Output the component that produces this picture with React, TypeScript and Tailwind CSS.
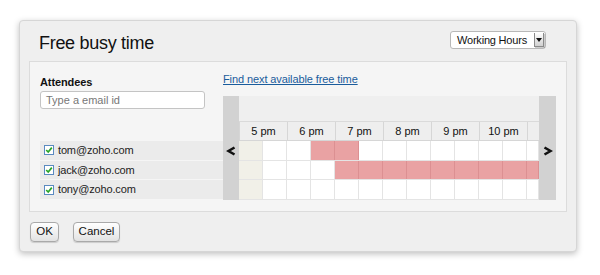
import React from "react";

const hours = ["5 pm", "6 pm", "7 pm", "8 pm", "9 pm", "10 pm"];
const busy: boolean[][] = [
  [false, false, false, true, true, false, false, false, false, false, false, false, false],
  [false, false, false, false, true, true, true, true, true, true, true, true, true],
  [false, false, false, false, false, false, false, false, false, false, false, false, false],
];
const people = ["tom@zoho.com", "jack@zoho.com", "tony@zoho.com"];

function Check() {
  return (
    <svg width="10" height="10" viewBox="0 0 10 10" className="shrink-0">
      <rect x="0.5" y="0.5" width="9" height="9" fill="#fff" stroke="#5a8ac0" />
      <path d="M2.2 5 L4.2 7 L7.8 2.6" fill="none" stroke="#2aa52a" strokeWidth="1.7" />
    </svg>
  );
}

export default function App() {
  return (
    <div className="w-[600px] h-[275px] bg-white relative overflow-hidden" style={{ fontFamily: '"Liberation Sans", Arial, sans-serif' }}>
      <div className="absolute left-[19px] top-[20px] w-[558px] h-[232px] bg-[#efefef] rounded-[4px] border border-[#d6d6d6] shadow-[0_2px_6px_rgba(0,0,0,0.25)] flex flex-col">
        <div className="h-[40px] flex items-start justify-between pl-[19px] pr-[30px]">
          <div className="text-[18px] tracking-[-0.3px] text-[#111] mt-[11px] leading-[22px]">Free busy time</div>
          <div className="mt-[10px] h-[18px] w-[96px] flex items-center bg-white border border-[#b8b8b8] rounded-[3px] text-[11px] tracking-[-0.2px] text-[#111] whitespace-nowrap">
            <span className="pl-[6px] flex-1">Working Hours</span>
            <span className="w-[10px] h-[14px] mr-[1px] bg-gradient-to-b from-white to-[#d0d0d0] border-l border-b border-r border-[#8a8a8a] flex items-center justify-center shadow-[1px_1px_0_rgba(0,0,0,0.2)]">
              <svg width="6" height="4" viewBox="0 0 6 4"><path d="M0 0 H6 L3 4Z" fill="#111" /></svg>
            </span>
          </div>
        </div>
        <div className="ml-[9px] w-[538px] h-[151px] bg-[#f5f5f5] border border-[#dcdcdc] flex pl-[10px] pr-[9px]">
          <div className="w-[183px] flex flex-col">
            <div className="mt-[13px] text-[11px] tracking-[-0.1px] font-bold text-[#111] leading-[14px]">Attendees</div>
            <div className="mt-[2px] w-[165px] h-[18px] bg-white border border-[#c4c4c4] rounded-[3px] text-[11px] text-[#777] pl-[5px] leading-[16px]">Type a email id</div>
            <div className="mt-[32px] flex flex-col gap-[1px]">
              {people.map((p) => (
                <div key={p} className="h-[18.7px] bg-[#ebebeb] flex items-center pl-[4px] gap-[4px] text-[11px] tracking-[-0.15px] text-[#222]">
                  <Check />
                  <span>{p}</span>
                </div>
              ))}
            </div>
          </div>
          <div className="flex flex-col">
            <div className="mt-[10px] text-[11px] tracking-[-0.1px] leading-[14px] text-[#1a5c9c] underline">Find next available free time</div>
            <div className="mt-[10px] flex h-[104px]">
              <div className="w-[16px] bg-[#d2d2d2] flex flex-col">
                <div className="h-[45px]" />
                <div className="h-[19px] flex items-center justify-center">
                  <svg width="10" height="10" viewBox="0 0 10 10"><path d="M8.5 1.5 L2.5 5 L8.5 8.5" fill="none" stroke="#111" strokeWidth="2.6" strokeLinejoin="miter" /></svg>
                </div>
              </div>
              <div className="w-[300px] flex flex-col">
                <div className="h-[26px] bg-[#efefef] border-b border-[#dadada]" />
                <div className="h-[19px] flex bg-[#eeeeee] border-b border-[#d6d6d6] border-l border-[#d6d6d6]">
                  {hours.map((h) => (
                    <div key={h} className="w-[48px] shrink-0 border-r border-[#d6d6d6] flex items-center justify-center text-[11px] text-[#111]">{h}</div>
                  ))}
                  <div className="w-[11px]" />
                </div>
                {busy.map((row, ri) => (
                  <div key={ri} className="h-[19.6px] flex bg-white border-b border-[#e4e4e4]">
                    {row.map((b, ci) => (
                      <div
                        key={ci}
                        className={
                          (ci === 12 ? "w-[12px] " : "w-[24px] ") +
                          "shrink-0 border-r " +
                          (b
                            ? "bg-[#e9a2a3] border-[#dc9092]"
                            : ci === 0
                            ? "bg-[#f1f0e8] border-[#e4e4e4]"
                            : "bg-white border-[#e4e4e4]")
                        }
                      />
                    ))}
                  </div>
                ))}
              </div>
              <div className="w-[17px] bg-[#d2d2d2] flex flex-col">
                <div className="h-[45px]" />
                <div className="h-[19px] flex items-center justify-center">
                  <svg width="10" height="10" viewBox="0 0 10 10"><path d="M1.5 1.5 L7.5 5 L1.5 8.5" fill="none" stroke="#111" strokeWidth="2.6" strokeLinejoin="miter" /></svg>
                </div>
              </div>
            </div>
          </div>
        </div>
        <div className="flex gap-[14px] ml-[10px] mt-[10px]">
          <button className="h-[20px] w-[29px] rounded-[4px] border border-[#a9a9a9] bg-gradient-to-b from-white to-[#e2e2e2] text-[11.5px] text-[#111] shadow-[0_1px_1px_rgba(0,0,0,0.15)]">OK</button>
          <button className="h-[20px] w-[47px] rounded-[4px] border border-[#a9a9a9] bg-gradient-to-b from-white to-[#e2e2e2] text-[11.5px] text-[#111] shadow-[0_1px_1px_rgba(0,0,0,0.15)]">Cancel</button>
        </div>
      </div>
    </div>
  );
}
